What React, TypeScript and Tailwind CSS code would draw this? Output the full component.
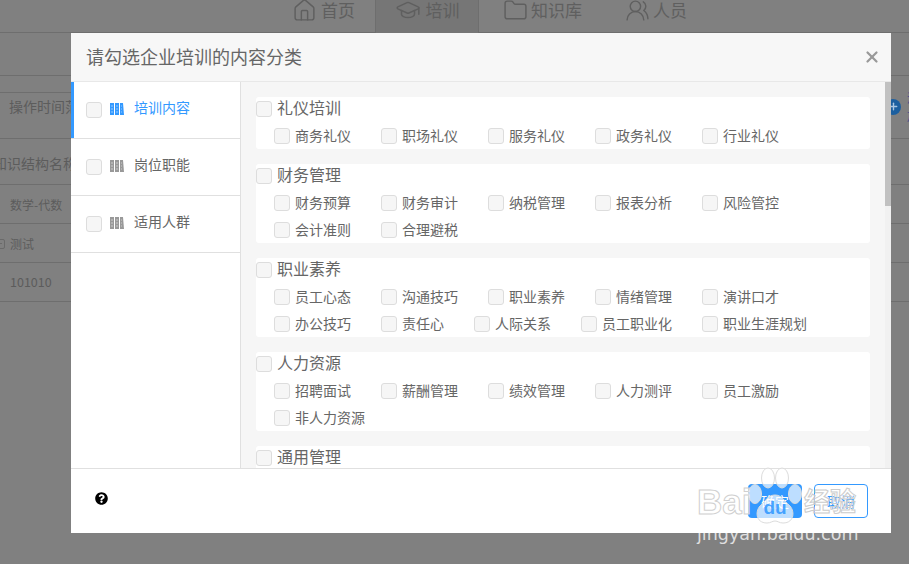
import { House, GraduationCap, Folder, UsersRound, X, Plus } from "lucide-react";
import { FaQuestionCircle } from "react-icons/fa";

const groups: { title: string; items: string[] }[] = [
  { title: "礼仪培训", items: ["商务礼仪", "职场礼仪", "服务礼仪", "政务礼仪", "行业礼仪"] },
  { title: "财务管理", items: ["财务预算", "财务审计", "纳税管理", "报表分析", "风险管控", "会计准则", "合理避税"] },
  { title: "职业素养", items: ["员工心态", "沟通技巧", "职业素养", "情绪管理", "演讲口才", "办公技巧", "责任心", "人际关系", "员工职业化", "职业生涯规划"] },
  { title: "人力资源", items: ["招聘面试", "薪酬管理", "绩效管理", "人力测评", "员工激励", "非人力资源"] },
  { title: "通用管理", items: ["领导力", "执行力"] },
];

function Box() {
  return <span className="block w-4 h-4 shrink-0 rounded-[3px] border border-[#dddddd] bg-[#f6f6f6]" />;
}

function Books({ color }: { color: string }) {
  return (
    <svg width="14" height="12" viewBox="0 0 14 12" className="shrink-0 mb-[2px]">
      <rect x="0" y="0" width="4" height="12" fill={color} />
      <rect x="5" y="0" width="4" height="12" fill={color} />
      <rect x="10" y="0" width="3" height="12" fill={color} />
      <path d="M13 0l1 12h-1z" fill={color} />
      <path d="M1 3h2M1 6h2M1 9h2M6 3h2M6 6h2M6 9h2M11 3h1M11 6h1M11 9h1" stroke="#fff" strokeWidth="1" opacity="0.5" />
    </svg>
  );
}

function Menu({ label, active }: { label: string; active?: boolean }) {
  return (
    <div className={`h-[57px] flex items-center gap-2 border-b border-[#e0e0e0] pl-[15px] pb-[1px] ${active ? "relative" : ""}`}>
      {active && <span className="absolute left-0 top-0 bottom-0 w-[3px] bg-[#3399ff]" />}
      <Box />
      <Books color={active ? "#3399ff" : "#999999"} />
      <span className={`ml-[2px] mb-[6px] text-[14px] leading-5 ${active ? "text-[#3399ff]" : "text-[#666666]"}`}>{label}</span>
    </div>
  );
}

function Card({ title, items }: { title: string; items: string[] }) {
  return (
    <div className="bg-white rounded-[3px] mb-[15px] w-[614px] shrink-0">
      <div className="h-[25px] flex items-center gap-[5px] pb-[2px] text-[16px] text-[#666666]">
        <Box />
        <span className="mb-[3px]">{title}</span>
      </div>
      <div className="flex flex-wrap pl-[18px] w-[600px]">
        {items.map((t) => (
          <div key={t} className="h-[27px] flex items-center gap-[5px] mr-[30px] text-[14px] text-[#666666] whitespace-nowrap">
            <Box />
            <span>{t}</span>
          </div>
        ))}
      </div>
    </div>
  );
}

export default function App() {
  return (
    <div className="relative w-[909px] h-[564px] overflow-hidden bg-[#808080] text-[#5c5c5c] [font-family:'Noto_Sans_CJK_SC',sans-serif]">
      {/* page behind the dialog */}
      <div className="h-[33px] flex items-center border-b border-[#6e6e6e] pl-[292px] text-[17px] text-[#5f5f5f]">
        <div className="flex items-center gap-[4px] w-[83px] -mt-[12px]">
          <House size={25} strokeWidth={1.4} />
          <span>首页</span>
        </div>
        <div className="flex items-center justify-center gap-[5px] w-[104px] h-[33px] bg-[#767676] border-x border-[#6e6e6e] pb-[12px]">
          <GraduationCap size={26} strokeWidth={1.4} />
          <span>培训</span>
        </div>
        <div className="flex items-center gap-[3px] ml-[24px] w-[122px] -mt-[12px]">
          <Folder size={25} strokeWidth={1.4} />
          <span>知识库</span>
        </div>
        <div className="flex items-center gap-[3px] -mt-[12px]">
          <UsersRound size={25} strokeWidth={1.4} />
          <span>人员</span>
        </div>
      </div>
      <div className="h-[43px] border-b border-[#6e6e6e]" />
      <div className="h-[63px] border-b border-[#6e6e6e] relative flex justify-between">
        <div className="w-[80px] h-[31px] mt-[16px] border-t border-[#6e6e6e] pl-[9px] text-[14px] leading-[27px] whitespace-nowrap overflow-hidden">操作时间范围</div>
        <div className="flex items-center gap-[6px] -mr-[14px] pb-[1px]">
          <span className="w-4 h-4 rounded-full bg-[#1c5f9f] flex items-center justify-center text-[#a9c6e2]">
            <Plus size={11} strokeWidth={3} />
          </span>
          <span className="text-[12px] text-[#4a4a8a] w-[16px] overflow-hidden">添加</span>
        </div>
      </div>
      <div className="h-[46px] border-b border-[#6e6e6e] -ml-[7px] pt-[3px] flex items-center text-[14px] whitespace-nowrap">知识结构名称</div>
      <div className="h-[39px] border-b border-[#6e6e6e] pl-[10px] pt-[1px] flex items-center text-[12px]">数学-代数</div>
      <div className="h-[39px] border-b border-[#6e6e6e] pl-[10px] pt-[1px] flex items-center text-[12px]">
        <span className="-ml-[15px] mr-[5px] w-[10px] h-[10px] border border-[#6a6a6a] rounded-[2px] flex items-center justify-center">
          <span className="w-[4px] h-px bg-[#6a6a6a]" />
        </span>
        测试
      </div>
      <div className="h-[39px] border-b border-[#6e6e6e] pl-[10px] pt-[1px] flex items-center text-[12.5px]">101010</div>

      {/* dialog */}
      <div className="absolute left-[71px] top-[33px] w-[820px] h-[500px] bg-white flex flex-col">
        <div className="h-[49px] shrink-0 bg-[#f7f7f7] border-b border-[#e8e8e8] flex items-center justify-between pl-[15px] pr-[10px]">
          <span className="text-[18px] text-[#666666] mb-[2px]">请勾选企业培训的内容分类</span>
          <X size={18} strokeWidth={3} className="text-[#999999]" />
        </div>
        <div className="h-[386px] shrink-0 flex">
          <div className="w-[170px] shrink-0 border-r border-[#e0e0e0] bg-white">
            <Menu label="培训内容" active />
            <Menu label="岗位职能" />
            <Menu label="适用人群" />
          </div>
          <div className="flex-1 bg-[#f6f6f6] pl-[15px] pt-[15px] overflow-hidden flex flex-col">
            {groups.map((g) => (
              <Card key={g.title} title={g.title} items={g.items} />
            ))}
          </div>
          <div className="w-[6px] shrink-0 bg-[#f1f1f1]">
            <div className="h-[124px] bg-[#c1c1c1]" />
          </div>
        </div>
        <div className="flex-1 border-t border-[#e0e0e0] flex items-center justify-between pl-[24px] pr-[23px]">
          <FaQuestionCircle size={13} className="text-black mb-[5px]" />
          <div className="flex gap-3 text-[14px]">
            <button className="w-[54px] h-[34px] rounded bg-[#3399ff] text-white">确定</button>
            <button className="w-[54px] h-[34px] rounded border border-[#3399ff] text-[#3399ff]">取消</button>
          </div>
        </div>
      </div>

      {/* watermark */}
      <div className="absolute left-[697px] top-[483px] text-[35px] leading-[38px] font-bold text-white/70 [-webkit-text-stroke:1px_#d0d0d0] [font-family:'Liberation_Sans',sans-serif]">Bai</div>
      <svg className="absolute left-[745px] top-[464px]" width="60" height="62" viewBox="0 0 60 62">
        <g fill="#ffffff" fillOpacity="0.68" stroke="#dcdcdc" strokeWidth="1">
          <ellipse cx="23" cy="14" rx="6.5" ry="10" />
          <ellipse cx="37" cy="14" rx="6.5" ry="10" />
          <ellipse cx="10" cy="30" rx="6.5" ry="9.5" />
          <ellipse cx="50" cy="30" rx="6.5" ry="9.5" />
          <path d="M30 31c7 0 9 6 14 10 6 5 6 18-6 18-4 0-5-2-8-2s-4 2-8 2c-12 0-12-13-6-18 5-4 7-10 14-10z" />
        </g>
        <text x="30" y="50" textAnchor="middle" fontSize="19" fontWeight="700" fill="#3399ff" fillOpacity="0.9" fontFamily="Liberation Sans, sans-serif">du</text>
      </svg>
      <div className="absolute left-[804px] top-[485px] text-[26px] leading-[30px] font-bold text-white/30 [-webkit-text-stroke:1px_#cccccc] whitespace-nowrap">经验</div>
      <div className="absolute left-[697px] top-[521px] text-[17.5px] leading-[26px] text-white/75 [font-family:'DejaVu_Sans',sans-serif] whitespace-nowrap">jingyan.baidu.com</div>
    </div>
  );
}
